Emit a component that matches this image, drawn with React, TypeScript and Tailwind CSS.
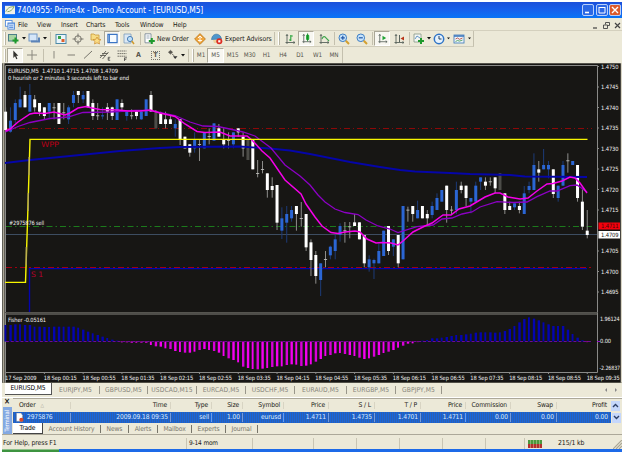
import React from "react";

type Bar = [number, number, number, number, string];

const X0 = 5.6;
const STEP = 4.847;
const xAt = (i: number) => X0 + STEP * i;

// Each entry: high, body top, body bottom, low (thirds of a pixel below `top`) and kind:
// w = bearish body, b = bullish body, g = dim body, d = doji
const SEGMENTS: { top: number; bars: Bar[] }[] = [
  {
    top: 80,
    bars: [
      [82, 95, 150, 150, "w"], [82, 122, 155, 158, "b"], [58, 69, 120, 130, "b"], [20, 58, 82, 82, "b"],
      [33, 45, 82, 82, "w"], [12, 45, 95, 95, "b"], [45, 58, 82, 95, "w"], [69, 69, 95, 108, "w"],
      [82, 82, 108, 120, "w"], [69, 69, 95, 118, "b"], [69, 82, 85, 118, "d"], [69, 69, 132, 132, "w"],
      [69, 97, 99, 118, "d"], [76, 82, 118, 132, "b"], [33, 45, 69, 82, "b"], [33, 33, 45, 69, "w"],
      [33, 45, 58, 69, "b"], [33, 33, 82, 82, "w"], [58, 69, 108, 120, "w"], [69, 106, 108, 120, "d"],
      [82, 106, 108, 118, "b"], [69, 82, 95, 120, "w"], [80, 82, 108, 120, "w"], [58, 58, 120, 120, "b"],
      [58, 69, 82, 95, "w"], [92, 95, 108, 122, "b"], [88, 106, 108, 118, "d"], [90, 95, 108, 118, "w"],
      [92, 95, 118, 120, "b"], [58, 58, 108, 108, "b"], [33, 45, 95, 95, "w"], [90, 97, 145, 145, "g"],
      [95, 100, 132, 132, "w"], [95, 118, 132, 145, "w"], [105, 118, 132, 132, "w"], [118, 132, 145, 170, "b"],
      [118, 118, 178, 195, "w"], [170, 170, 205, 205, "w"], [193, 193, 218, 230, "w"], [157, 178, 205, 218, "b"],
      [178, 192, 194, 243, "d"], [157, 157, 205, 205, "b"], [145, 168, 170, 193, "d"], [130, 130, 182, 182, "b"],
      [132, 145, 170, 170, "w"], [145, 180, 193, 205, "w"], [157, 180, 182, 205, "d"], [157, 157, 193, 205, "b"],
      [145, 145, 157, 170, "w"], [157, 170, 205, 230, "w"], [178, 180, 240, 240, "g"], [180, 180, 268, 268, "w"],
      [240, 279, 281, 292, "d"], [243, 267, 269, 280, "d"], [280, 280, 330, 353, "w"], [292, 318, 330, 353, "w"],
    ],
  },
  {
    top: 180,
    bars: [
      [15, 15, 128, 150, "w"], [82, 115, 152, 177, "b"], [78, 102, 128, 188, "b"], [78, 90, 115, 125, "b"],
      [78, 78, 102, 152, "w"], [66, 114, 116, 140, "d"], [102, 102, 202, 213, "w"], [178, 187, 240, 288, "w"],
      [213, 225, 288, 311, "w"], [250, 250, 300, 348, "b"], [213, 237, 240, 262, "d"], [197, 200, 226, 238, "b"],
      [165, 178, 213, 238, "b"], [130, 138, 165, 185, "b"], [126, 151, 153, 188, "d"], [126, 139, 141, 175, "d"],
      [102, 127, 138, 138, "w"], [127, 127, 178, 178, "w"], [165, 165, 250, 262, "w"], [226, 238, 262, 275, "b"],
      [236, 240, 250, 297, "b"], [190, 213, 250, 250, "b"], [152, 152, 228, 228, "b"], [138, 138, 213, 225, "w"],
      [178, 178, 200, 228, "b"], [165, 165, 250, 262, "w"], [78, 78, 238, 238, "b"],
    ],
  },
  {
    top: 130,
    bars: [
      [230, 239, 241, 275, "d"], [228, 228, 252, 275, "w"], [212, 240, 265, 265, "b"], [228, 228, 265, 265, "w"],
      [240, 252, 265, 285, "w"], [215, 228, 255, 265, "b"], [190, 204, 240, 240, "b"], [180, 180, 215, 215, "b"],
      [167, 167, 240, 278, "w"], [228, 239, 241, 252, "d"], [155, 180, 240, 252, "b"], [155, 167, 180, 190, "w"],
      [167, 167, 204, 228, "w"], [204, 204, 215, 250, "b"], [155, 167, 215, 215, "b"], [142, 142, 155, 180, "b"],
      [142, 155, 167, 180, "w"], [142, 154, 156, 167, "d"], [142, 142, 175, 190, "w"], [130, 130, 180, 180, "g"],
      [190, 190, 240, 252, "w"], [215, 228, 240, 240, "w"], [218, 220, 232, 240, "b"], [215, 228, 240, 250, "w"],
      [168, 190, 252, 252, "b"], [155, 168, 180, 190, "b"], [70, 105, 180, 180, "b"], [93, 118, 128, 155, "w"],
      [57, 105, 118, 118, "b"], [93, 105, 118, 145, "b"], [118, 118, 192, 204, "w"], [167, 167, 204, 215, "b"],
      [93, 105, 167, 167, "b"], [70, 91, 93, 128, "d"], [93, 93, 105, 105, "b"], [105, 105, 204, 215, "w"],
      [178, 215, 290, 300, "w"], [240, 302, 315, 325, "w"],
    ],
  },
];

const CANDLES = SEGMENTS.flatMap((s) =>
  s.bars.map(([h, t, b, l, k]) => ({ h: s.top + h / 3, t: s.top + t / 3, b: s.top + b / 3, l: s.top + l / 3, k })),
);

// Histogram ends, thirds of a pixel below the sub-window's top
const FISHER = [
  60, 60, 58, 58, 60, 60, 65, 65, 66, 66, 65, 65, 65, 65, 65, 68, 74, 80, 85, 90, 95, 99, 104, 107,
  112, 112, 113, 113, 113, 113, 120, 124, 125, 130, 132, 138, 141, 143, 143, 140, 135, 132, 135, 138, 143,
  153, 160, 165, 172, 185, 189, 192, 193, 191, 189, 186, 184, 184, 180, 178, 179, 183, 182, 178, 170,
  162, 153, 150, 145, 144, 147, 150, 153, 158, 162, 160, 155, 150, 144, 140, 135, 128, 122, 116, 115, 110,
  107, 105, 100, 100, 98, 96, 93, 90, 90, 88, 86, 83, 82, 82, 82, 83, 82, 78, 72, 63, 52, 42, 37, 41,
  46, 52, 58, 63, 63, 63, 74, 87, 98, 106, 111,
];

const FAST =
  "5.5,131 10,129 18,122 30,114 35,113 45,113.5 54,112 65,115 70,113 78,108 86,106.5 92,108 100,109.5 118,110 128,111 140,111 150,110 160,113 175,116.5 185,124 197,131.5 205,132.5 220,132 230,136 247,136 252,140 262,151 270,158 285,180 301,194 306,204 315,217 322,226 331,232.5 338,233.5 345,232 355,231 360,232 367,239 376,243 382,242.5 391,243 398,245 403,241 413,232 425,226 432,223 443,215 451,215 459,209 470,206 485,197 495,193 500,193 508,197 520,199 528,198 537,191 547,184 553,183.5 562,181 570,177 575,178 580,183 587,193";
const SLOW =
  "5.5,132 18,126.5 30,122.5 50,118.5 68,117 83,112.5 110,112 135,110.5 150,110.5 175,115.5 190,122 203,126 218,126.5 232,129.5 243,132 255,136 263,142 271,148 285,165 300,176 310,185 318,195 325,202 335,209 345,212.5 358,214.5 366,220 378,226 390,229 398,232.5 417,226.7 433,225 442,219 452,218 462,214 472,212 480,207 497,201.7 513,202.5 527,202 537,196.7 550,191 557,191 570,185.7 577,185 587,192";
const LONG =
  "5,163 30,160 80,155 120,151 160,148 180,147 240,146.5 270,148.5 290,150.5 310,154 350,162 380,167 400,170 415,171.5 450,173 470,174 510,175 525,176.5 587,177";

const PRICES = ["1.4750", "1.4745", "1.4740", "1.4735", "1.4730", "1.4725", "1.4720", "1.4715", "", "1.4705", "1.4700", "1.4695"];
const TIMES = [
  "17 Sep 2009", "18 Sep 00:15", "18 Sep 00:55", "18 Sep 01:35", "18 Sep 02:15", "18 Sep 02:55", "18 Sep 03:35", "18 Sep 04:15",
  "18 Sep 04:55", "18 Sep 05:35", "18 Sep 06:15", "18 Sep 06:55", "18 Sep 07:35", "18 Sep 08:15", "18 Sep 08:55", "18 Sep 09:35",
];

function Label({ x, y, w, fill = "#f0f0f0", size = 5.8, children }: { x: number; y: number; w: number; fill?: string; size?: number; children: string }) {
  return (
    <text className="whitespace-pre" x={x} y={y} textLength={w} lengthAdjust="spacingAndGlyphs" fontSize={size} fill={fill}>
      {children}
    </text>
  );
}

function Chart() {
  return (
    <svg className="block h-[320px] w-[620px] shrink-0" viewBox="2 63 620 320" fontFamily="'DejaVu Sans Condensed','DejaVu Sans',sans-serif">
      <rect x="2" y="63" width="620" height="320" fill="#171614" />
      <path d="M2 63.5H622" stroke="#55534c" />
      <path d="M3.5 63V383" stroke="#aca899" strokeWidth="2" />
      <path d="M5.5 383V65.5H597.5V372.5H5" fill="none" stroke="#8a8a88" />
      <path d="M5 312.5H597.5" stroke="#55544f" />
      <path d="M5 314H597.5" stroke="#85837e" strokeWidth="1.2" />
      <path d="M621.5 63V383" stroke="#d8d4c4" strokeWidth="1.5" />

      <path d="M6 128.5H592" stroke="#8c0808" strokeDasharray="6 3 1 3" />
      <path d="M6 226.5H592" stroke="#1c7a1c" strokeDasharray="6 3 1.5 3" />
      <path d="M6 234.5H597" stroke="#3d4d61" />
      <path d="M29.5 312V268.6H587" fill="none" stroke="#0404b0" strokeWidth="1.4" />
      <path d="M6 267.5H593" stroke="#a00010" strokeDasharray="6 3 2 3" />

      {CANDLES.map((c, i) => {
        const x = xAt(i);
        const wick = c.k === "b" ? "#1d3b78" : "#8d8d8b";
        const fill = c.k === "b" ? "#2b66d4" : c.k === "g" ? "#4c4c48" : "#ffffff";
        return (
          <g key={i}>
            <rect x={x - 0.5} y={c.h} width="1" height={c.l - c.h} fill={wick} />
            {c.k === "d" ? (
              <rect x={x - 1.6} y={c.t} width="3.2" height="0.9" fill="#bdbdbb" />
            ) : (
              <rect x={x - 1.5} y={c.t} width="3" height={Math.max(1, c.b - c.t)} fill={fill} />
            )}
          </g>
        );
      })}

      <polyline points={LONG} fill="none" stroke="#0505a8" strokeWidth="1.8" />
      <polyline points={SLOW} fill="none" stroke="#8c00c4" strokeWidth="1.3" />
      <polyline points={FAST} fill="none" stroke="#f400e8" strokeWidth="1.5" />
      <path d="M5 282.4H25.5L27.6 219L30 139.4H587.5" fill="none" stroke="#f8f600" strokeWidth="1.4" />
      <path d="M26.2 247V265M28.2 193V211M29 157V175" stroke="#a89868" strokeWidth="1.1" />

      <Label x={41} y={147} w={18} fill="#b80018" size={7.5}>WPP</Label>
      <Label x={31} y={277} w={12} fill="#b80030" size={7.5}>S 1</Label>
      <Label x={8} y={73} w={110}>EURUSD,M5  1.4710 1.4715 1.4708 1.4709</Label>
      <Label x={8} y={80} w={121}>0 hourish or 2 minutes 3 seconds left to bar end</Label>
      <Label x={9} y={225} w={35}>#2975876 sell</Label>

      {PRICES.map((p, i) =>
        p ? (
          <g key={i}>
            <path d={`M597 ${66.5 + i * 20.5}h2`} stroke="#8a8a88" />
            <Label x={601} y={68.8 + i * 20.5} w={17.5}>{p}</Label>
          </g>
        ) : null,
      )}
      <rect x="598.5" y="222.5" width="21.5" height="7" fill="#f4000c" />
      <Label x={601} y={228.3} w={17.5} fill="#3c0808">1.4711</Label>
      <rect x="598.5" y="231" width="21.5" height="7.5" fill="#ffffff" />
      <Label x={601} y={237} w={17.5} fill="#222222">1.4709</Label>

      {FISHER.map((v, i) => {
        const end = 305 + v / 3;
        const up = end < 341.5;
        return (
          <rect key={i} x={xAt(i) - 1.1} y={up ? end : 341.5} width={i % 3 === 0 ? 1.9 : 2.4} height={Math.max(0.6, Math.abs(end - 341.5))} fill={up ? "#0404b0" : i % 3 === 1 ? "#d800d8" : "#f400f0"} />
        );
      })}
      <path d="M6 341.5H592" stroke="#6d0899" strokeDasharray="2.9 1.95" />
      <path d="M597 341.5h3" stroke="#9010c0" />
      <Label x={8} y={322.3} w={38}>Fisher -0.05161</Label>
      <Label x={600} y={320.7} w={19.5}>1.96124</Label>
      <Label x={600} y={343.2} w={11}>0.00</Label>
      <Label x={599.5} y={370.2} w={20.5}>-2.26837</Label>

      {TIMES.map((t, i) => (
        <g key={t}>
          <path d={`M${xAt(i * 8)} 372v2`} stroke="#8a8a88" />
          <Label x={i ? 5 + i * 38.78 : 5} y={380} w={i ? 33 : 31.5}>{t}</Label>
        </g>
      ))}
      <rect x="2" y="382.5" width="620" height="1" fill="#8a8878" />
    </svg>
  );
}

const Caret = () => (
  <svg className="h-[3px] w-[4px]" viewBox="0 0 4 3"><path d="M0 0h4L2 2.6z" fill="#111" /></svg>
);
const Sep = () => <div className="h-[13px] w-px bg-[#c4c0ae]" />;
const Grip = () => <div className="h-[13px] w-[2px] border-l border-r border-l-white border-r-[#b9b5a3]" />;

function Cell({ w, on, children }: { w: string; on?: boolean; children?: React.ReactNode }) {
  return (
    <div className={`${w} flex h-[15px] shrink-0 items-center justify-center ${on ? "border border-[#aaa797] border-b-white border-r-white bg-[#f8f7f1]" : ""}`}>
      {children}
    </div>
  );
}

function Icon({ children, s = "size-[12px]" }: { children: React.ReactNode; s?: string }) {
  return <svg className={`${s} shrink-0`} viewBox="0 0 12 12" fill="none">{children}</svg>;
}

const plus = (x: number, y: number) => (
  <path d={`M${x} ${y - 3}v6M${x - 3} ${y}h6`} stroke="#1e9a2c" strokeWidth="2" />
);
const axes = <path d="M3 1.5V11M1.5 9.5H11M2 3l1-1.5L4 3M9.5 8.5l1.5 1-1.5 1" stroke="#59635c" strokeWidth="0.9" />;

function MainToolbar() {
  return (
    <div className="flex h-[16px] w-[472px] shrink-0 items-center border-r border-b border-r-[#c4c0ae] border-b-[#d0ccba]">
      <Cell w="w-[5px]"><Grip /></Cell>
      <Cell w="w-[14px]"><Icon><rect x="0.5" y="1.5" width="8" height="6.5" fill="#a9d4a4" stroke="#4c7f88" />{plus(7.5, 7.5)}</Icon></Cell>
      <Cell w="w-[5px]"><Caret /></Cell>
      <Cell w="w-[16px]"><Icon><rect x="1" y="1" width="8" height="7" fill="#d5e6f8" stroke="#6f95c4" /><path d="M3 8.5h8V4.5" stroke="#5c84b8" strokeWidth="2" /></Icon></Cell>
      <Cell w="w-[5px]"><Caret /></Cell>
      <Cell w="w-[6px]"><Sep /></Cell>
      <Cell w="w-[16px]"><Icon><rect x="1" y="1.5" width="10" height="9" fill="#e9f4fb" stroke="#4d8aa8" /><path d="M3 3h3v3H3z" fill="#39a348" /><path d="M6.5 6h3v3h-3z" fill="#e0622c" /></Icon></Cell>
      <Cell w="w-[18px]"><Icon><circle cx="6" cy="6" r="3.3" stroke="#77756c" /><path d="M6 0.5v4M6 7.5v4M0.5 6h4M7.5 6h4" stroke="#77756c" /></Icon></Cell>
      <Cell w="w-[17px]"><Icon><path d="M1 1h3l1 1h4v5H1z" fill="#f7dc84" stroke="#c9993a" strokeWidth="0.8" /><path d="M7 4l1.3 2.3 2.7.3-2 1.7.5 2.7L7 9.8l-2.5 1.2.5-2.7-2-1.7 2.7-.3z" fill="#fbdc84" stroke="#cc8d2c" strokeWidth="0.7" /></Icon></Cell>
      <Cell w="w-[16px]" on><Icon s="size-[11px]"><rect x="1" y="1.5" width="10" height="9" fill="#f6fbff" stroke="#3672c4" strokeWidth="1.3" /><path d="M2.5 2v8" stroke="#3672c4" strokeWidth="1.3" /></Icon></Cell>
      <Cell w="w-[18px]"><Icon><path d="M1 1h7v9H1z" fill="#dbe8f4" stroke="#7f9cbb" strokeWidth="0.8" /><circle cx="7" cy="6" r="2.6" fill="#bfe0f8" stroke="#4a80b8" /><path d="M8.8 8L11 11" stroke="#d09a2c" strokeWidth="1.5" /></Icon></Cell>
      <Cell w="w-[5px]"><Sep /></Cell>
      <Cell w="w-[13px]"><Icon><path d="M1 .8h6v9H1z" fill="#fff" stroke="#708090" strokeWidth="0.8" /><path d="M2.5 3h3M2.5 5h3" stroke="#8294a8" strokeWidth="0.8" />{plus(7.8, 8)}</Icon></Cell>
      <div className="w-[35px] pt-[2px] pl-[1px] text-[6.8px] tracking-[-0.1px]">New Order</div>
      <Cell w="w-[18px]"><Icon><path d="M6 .6L11.4 6 6 11.4.6 6z" fill="#f0a63c" stroke="#b8741c" strokeWidth="0.8" /><path d="M6 3v6M4 5l2-2 2 2M4 7.5h4" stroke="#fff" strokeWidth="0.9" /></Icon></Cell>
      <Cell w="w-[15px]"><Icon><path d="M.5 6.5C1 2 4 1 6 1.2S10 3 10.5 6z" fill="#4e96cc" stroke="#2f6e9e" strokeWidth="0.6" /><path d="M2 7h5v3H3z" fill="#ecd29c" /><circle cx="8.3" cy="8.3" r="3" fill="#dd2c22" /><rect x="7.2" y="7.2" width="2.2" height="2.2" fill="#fff" /></Icon></Cell>
      <div className="w-[49px] pt-[2px] pl-px text-[6.8px] tracking-[-0.08px]">Expert Advisors</div>
      <Cell w="w-[3px]"><Sep /></Cell>
      <Cell w="w-[5px]"><Grip /></Cell>
      <Cell w="w-[17px]"><Icon>{axes}<path d="M6.8 2v6M6.8 3h2M5 7h2" stroke="#25a238" strokeWidth="1.1" /></Icon></Cell>
      <Cell w="w-[16px]" on><Icon s="size-[11px]">{axes}<rect x="5.5" y="2" width="3.5" height="5.5" rx="1" fill="#27b53c" /><path d="M7.2.5v8.5" stroke="#188028" /></Icon></Cell>
      <Cell w="w-[19px]"><Icon>{axes}<path d="M4 6c1-3 3-3 4-1l3 3" stroke="#3fa64c" strokeWidth="1.1" /></Icon></Cell>
      <Cell w="w-[2px]"><Sep /></Cell>
      <Cell w="w-[18px]"><Icon><circle cx="4.8" cy="4.8" r="3.8" fill="#c6e2fa" stroke="#3e7fc4" /><path d="M4.8 2.8v4M2.8 4.8h4" stroke="#2058a8" strokeWidth="1.2" /><path d="M7.8 7.8L11 11" stroke="#d4a030" strokeWidth="2" /></Icon></Cell>
      <Cell w="w-[17px]"><Icon><circle cx="4.8" cy="4.8" r="3.8" fill="#c6e2fa" stroke="#3e7fc4" /><path d="M2.8 4.8h4" stroke="#2058a8" strokeWidth="1.2" /><path d="M7.8 7.8L11 11" stroke="#d4a030" strokeWidth="2" /></Icon></Cell>
      <Cell w="w-[4px]"><Sep /></Cell>
      <Cell w="w-[16px]" on><Icon s="size-[11px]">{axes}<path d="M6 3l4 2.5L6 8z" fill="#1fa234" /></Icon></Cell>
      <Cell w="w-[18px]"><Icon>{axes}<path d="M6.5 2v7" stroke="#59635c" /><path d="M11 3.5v4L7.5 5.5z" fill="#b83418" /></Icon></Cell>
      <Cell w="w-[3px]"><Sep /></Cell>
      <Cell w="w-[15px]"><Icon><path d="M1 1h7v8H1z" fill="#f3f7f3" stroke="#859585" strokeWidth="0.8" /><path d="M2 6l2-3 3 2" stroke="#578ac2" strokeWidth="0.9" />{plus(8, 8)}</Icon></Cell>
      <Cell w="w-[5px]"><Caret /></Cell>
      <Cell w="w-[16px]"><Icon><circle cx="6" cy="6" r="4.7" fill="#e6f2fd" stroke="#2f74c6" strokeWidth="1.5" /><path d="M6 3v3h2.5" stroke="#24405c" /></Icon></Cell>
      <Cell w="w-[3px]"><Caret /></Cell>
      <Cell w="w-[18px]"><Icon><rect x="1" y="2" width="10" height="8" fill="#edf4fb" stroke="#4d83bd" strokeWidth="0.9" /><path d="M1 3h10" stroke="#3f79bd" strokeWidth="1.6" /><path d="M2.5 6l2-1 2 1.3 3-1.3" stroke="#b03a2c" strokeWidth="0.8" /><path d="M2.5 8.5l2-1 2 .6 3-1" stroke="#3a9448" strokeWidth="0.8" /></Icon></Cell>
      <Cell w="w-[3px]"><Caret /></Cell>
    </div>
  );
}

function LineToolbar() {
  return (
    <div className="flex h-[16px] w-[341px] shrink-0 items-center border-r border-r-[#c4c0ae] text-[6.3px] text-[#55534c]">
      <Cell w="w-[5px]"><Grip /></Cell>
      <Cell w="w-[16px]" on><Icon s="size-[10px]"><path d="M4 .5v9l2-2 1.5 3.5 1.4-.6L7.4 7H10z" fill="#33322e" /></Icon></Cell>
      <Cell w="w-[18px]"><Icon><path d="M6 1v10M1 6h10" stroke="#8a887e" /></Icon></Cell>
      <Cell w="w-[4px]"><Sep /></Cell>
      <Cell w="w-[17px]"><Icon><path d="M6 2v7.5" stroke="#8a887e" /></Icon></Cell>
      <Cell w="w-[17px]"><Icon><path d="M2.5 6h7.5" stroke="#8a887e" strokeWidth="1.1" /></Icon></Cell>
      <Cell w="w-[17px]"><Icon><path d="M2 9.5L10 2" stroke="#77756c" strokeWidth="1" /></Icon></Cell>
      <Cell w="w-[17px]"><Icon><path d="M1 9l6-7M3.5 10l6-7M1 6.5h6M3 4.5h6" stroke="#5e5c55" strokeWidth="0.9" /><path d="M11.3 8.3H9.2v3h2M9.2 9.8h1.6" stroke="#333" strokeWidth="0.7" /></Icon></Cell>
      <Cell w="w-[17px]"><Icon><path d="M1.5 2h9M1.5 4.6h9M1.5 7.2h9" stroke="#77756c" strokeDasharray="1.5 .5" /><path d="M8.5 12V8.8h2.5M8.5 10.3h1.8" stroke="#333" strokeWidth="0.7" /></Icon></Cell>
      <Cell w="w-[17px]"><b className="pt-px text-[7px]">A</b></Cell>
      <Cell w="w-[17px]"><div className="flex h-[9px] w-[9px] items-center justify-center border border-dotted border-[#77756c] text-[6.5px] font-bold">T</div></Cell>
      <Cell w="w-[17px]"><Icon><path d="M1.5 3.2L3.5 1.4l2 1.8-2 1.8zM5 5l2.5 2" fill="#55534c" stroke="#55534c" strokeWidth="0.8" /><path d="M6 7.2h4.5L8.2 10z" fill="#333" /></Icon></Cell>
      <Cell w="w-[4px]"><Caret /></Cell>
      <Cell w="w-[6px]"><Sep /></Cell>
      <Cell w="w-[4px]"><Grip /></Cell>
      <div className="flex items-center pt-px">
        <Cell w="w-[12px]">M1</Cell>
        <Cell w="w-[17px]" on>M5</Cell>
        <Cell w="w-[17px]">M15</Cell>
        <Cell w="w-[17px]">M30</Cell>
        <Cell w="w-[17px]">H1</Cell>
        <Cell w="w-[16px]">H4</Cell>
        <Cell w="w-[18px]">D1</Cell>
        <Cell w="w-[17px]">W1</Cell>
        <Cell w="w-[16px]">MN</Cell>
      </div>
    </div>
  );
}

const MENU: [string, string][] = [
  ["File", "w-[19px]"], ["View", "w-[24px]"], ["Insert", "w-[25px]"], ["Charts", "w-[29px]"],
  ["Tools", "w-[25px]"], ["Window", "w-[33px]"], ["Help", "w-[20px]"],
];

const CHART_TABS: [string, string][] = [
  ["EURJPY,M5", "w-[48px]"], ["GBPUSD,M5", "w-[48px]"], ["USDCAD,M15", "w-[49px]"], ["EURCAD,M5", "w-[49px]"],
  ["USDCHF,M5", "w-[49px]"], ["EURAUD,M5", "w-[52px]"], ["EURGBP,M5", "w-[49px]"], ["GBPJPY,M5", "w-[46px]"],
];

const COLUMNS: [string, string, string][] = [
  ["Time", "2009.09.18 09:35", "w-[100px]"], ["Type", "sell", "w-[41px]"], ["Size", "1.00", "w-[31px]"],
  ["Symbol", "eurusd", "w-[41px]"], ["Price", "1.4711", "w-[45px]"], ["S / L", "1.4735", "w-[46px]"],
  ["T / P", "1.4701", "w-[46px]"], ["Price", "1.4711", "w-[45px]"], ["Commission", "0.00", "w-[45px]"],
  ["Swap", "0.00", "w-[46px]"], ["Profit", "0.00", "w-[54px]"],
];

const TERMINAL_TABS: [string, string][] = [
  ["Account History", "w-[58px]"], ["News", "w-[28px]"], ["Alerts", "w-[29px]"], ["Mailbox", "w-[34px]"],
  ["Experts", "w-[34px]"], ["Journal", "w-[32px]"],
];

function Terminal() {
  return (
    <div className="flex h-[37px] w-[620px] shrink-0 border-t border-t-white">
      <div className="flex w-[10px] shrink-0 flex-col items-center">
        <div className="h-[9px] text-[8px] leading-[8px] font-bold">×</div>
        <div className="flex h-[27px] w-[9px] items-center justify-center bg-[#84a9e2]">
          <span className="rotate-180 text-[6px] leading-none text-white [writing-mode:vertical-rl]">Terminal</span>
        </div>
      </div>
      <div className="flex w-[610px] flex-col pl-[1px]">
        <div className="flex h-[14px] items-center border-t border-t-[#aca899]">
          <div className="w-[57px] pl-[6px]">Order<span className="pl-[5px] text-[5px] text-[#99968a]">△</span></div>
          {COLUMNS.map(([h, , w], i) => (
            <div key={i} className={`${w} shrink-0 border-l border-l-[#d8d4c3] pr-[3px] text-right whitespace-nowrap`}>{h}</div>
          ))}
          <div className="ml-px flex h-[10px] w-[9px] items-center justify-center bg-[#c5d7fb]">
            <svg className="h-[5px] w-[7px]" viewBox="0 0 7 5"><path d="M1 4l2.5-2.5L6 4" fill="none" stroke="#2c3f66" strokeWidth="1.4" /></svg>
          </div>
        </div>
        <div className="flex h-[11px] items-center">
          <div className="flex h-[11px] w-[598px] items-center bg-[repeating-linear-gradient(90deg,#2d5fb0_0_1px,#1766dc_1px_2px)] text-[#dceaff]">
            <div className="flex w-[57px] items-center">
              <Icon s="size-[9px] ml-[2px]"><path d="M2 0h6l2 3v8H2z" fill="#fff" stroke="#888" strokeWidth="0.6" /><circle cx="8.5" cy="9" r="2.8" fill="#dc4a28" /></Icon>
              <span className="pl-[3px] tracking-[-0.2px]">2975876</span>
            </div>
            {COLUMNS.map(([, v, w], i) => (
              <div key={i} className={`${w} h-[9px] shrink-0 border-l border-l-[#6f9be4] pr-[2px] text-right leading-[9px] whitespace-nowrap`}>{v}</div>
            ))}
          </div>
          <div className="ml-[1px] flex h-[10px] w-[9px] items-center justify-center bg-[#c5d7fb]">
            <svg className="h-[5px] w-[7px]" viewBox="0 0 7 5"><path d="M1 1l2.5 2.5L6 1" fill="none" stroke="#2c3f66" strokeWidth="1.4" /></svg>
          </div>
        </div>
        <div className="flex h-[11px] items-start text-[#77756a]">
          <div className="flex h-[11px] w-[30px] items-center justify-center border-r border-b border-[#444] bg-white text-black">Trade</div>
          <div className="flex h-[11px] items-center">
            {TERMINAL_TABS.map(([t, w]) => (
              <div key={t} className={`${w} h-[8px] border-r border-r-[#77756a] text-center leading-[8px] whitespace-nowrap`}>{t}</div>
            ))}
          </div>
        </div>
      </div>
    </div>
  );
}

const WinButton = ({ bg, children }: { bg: string; children: React.ReactNode }) => (
  <div className={`flex size-[12px] items-center justify-center rounded-[2px] border border-[#b9d0fa] ${bg}`}>
    <svg className="size-[8px]" viewBox="0 0 8 8" fill="none" stroke="#fff">{children}</svg>
  </div>
);

export default function App() {
  return (
    <div className="h-[452px] w-[625px] overflow-hidden bg-white pt-[2px] font-['DejaVu_Sans_Condensed','DejaVu_Sans',sans-serif] text-[6.7px] leading-none tracking-[-0.12px] text-[#1b1a17]">
      <div className="ml-[2px] flex h-[447px] w-[620px] flex-col bg-[#ece9d8]">
        <div className="flex h-[16px] shrink-0 items-center bg-linear-to-b from-[#1c50da] via-[#1660ec] to-[#0874f6] text-white">
          <Icon s="size-[10px] ml-[3px]"><path d="M0 1h12v10H0z" fill="#f1f2e8" /><path d="M1 8c2-5 6-6 10-6-2 4-5 6-8 6" stroke="#83a866" strokeWidth="1.2" /></Icon>
          <div className="w-[480px] pt-[1px] pl-[2px] text-[8.4px] tracking-[-0.1px] whitespace-nowrap">7404955: Prime4x - Demo Account - [EURUSD,M5]</div>
          <div className="ml-auto flex gap-[1.5px] pr-[1px]">
            <WinButton bg="bg-[#2c68e4]"><path d="M1 6.5h4" strokeWidth="1.6" /></WinButton>
            <WinButton bg="bg-[#2c68e4]"><path d="M1 1.5h6M1 1v6h6V1" /></WinButton>
            <WinButton bg="bg-[#dc5a2c]"><path d="M1 1l6 6M7 1L1 7" strokeWidth="1.4" /></WinButton>
          </div>
        </div>
        <div className="flex h-[13px] shrink-0 items-center border-b border-b-[#d4d0be] pt-[2px] text-[6.8px]">
          <Icon s="size-[10px] ml-[3px] mr-[3px]"><rect x="0.5" y="0.5" width="8" height="7" fill="#fff" stroke="#4c86d8" /><rect x="3.5" y="3.5" width="8" height="7.5" fill="#d6e6fb" stroke="#4c86d8" /><path d="M3.5 4.5h8M5 7h5M5 9h5" stroke="#4c86d8" /></Icon>
          {MENU.map(([m, w]) => <div key={m} className={w}>{m}</div>)}
          <div className="ml-auto flex gap-[4px] pr-[1px]">
            <svg className="size-[7px]" viewBox="0 0 7 7"><path d="M1 6h4" stroke="#444" strokeWidth="1.2" /></svg>
            <svg className="size-[7px]" viewBox="0 0 7 7" fill="none" stroke="#444" strokeWidth="0.9"><path d="M2.5 2.5v-2h4v3h-2M.5 3h4v3.5h-4z" /></svg>
            <svg className="size-[7px]" viewBox="0 0 7 7"><path d="M1 1l5 5M6 1L1 6" stroke="#444" strokeWidth="1.2" /></svg>
          </div>
        </div>
        <MainToolbar />
        <LineToolbar />
        <Chart />
        <div className="flex h-[14px] shrink-0 items-center pl-[3px] text-[#85837a]">
          <div className="flex h-[12px] w-[47px] items-center justify-center self-start border-r border-b border-[#555] bg-white text-black">EURUSD,M5</div>
          {CHART_TABS.map(([t, w]) => (
            <div key={t} className={`${w} h-[8px] border-r border-r-[#99968a] text-center leading-[8px] tracking-[0.08px] whitespace-nowrap`}>{t}</div>
          ))}
          <div className="ml-auto flex gap-[6px] pr-[4px]">
            <svg className="size-[4px]" viewBox="0 0 4 4"><path d="M3 0L1 2l2 2" fill="#888" /></svg>
            <svg className="size-[4px]" viewBox="0 0 4 4"><path d="M1 0l2 2-2 2" fill="#888" /></svg>
          </div>
        </div>
        <Terminal />
        <div className="flex h-[15px] shrink-0 items-center border-t border-t-[#aca899] pt-[3px] text-[6.9px]">
          <div className="w-[184px] pl-px">For Help, press F1</div>
          <div className="flex h-[11px] items-center">
            <div className="flex h-full w-[66px] items-center border-l border-l-[#c9c5b3] pl-[2px] text-[6.5px] tracking-[-0.15px]">9-14 mom</div>
            <div className="h-full w-[61px] border-l border-l-[#c9c5b3]" />
            <div className="h-full w-[43px] border-l border-l-[#c9c5b3]" />
            <div className="h-full w-[43px] border-l border-l-[#c9c5b3]" />
            <div className="h-full w-[43px] border-l border-l-[#c9c5b3]" />
            <div className="h-full w-[43px] border-l border-l-[#c9c5b3]" />
            <div className="h-full w-[39px] border-l border-l-[#c9c5b3]" />
            <div className="flex h-full w-[34px] items-center border-l border-l-[#c9c5b3] pl-[3px]">
              <svg className="h-[8px] w-[14px]" viewBox="0 0 14 8">
                <path d="M0 0h14v4H0z" fill="#4b9a3c" />
                <path d="M0 4h14v4H0z" fill="#b4302c" />
                <path d="M2.5 0v8M5.5 0v8M8.5 0v8M11.5 0v8" stroke="#e8e4d0" strokeWidth="0.4" />
              </svg>
            </div>
            <div>215/1 kb</div>
          </div>
          <svg className="mt-auto ml-auto h-[9px] w-[9px]" viewBox="0 0 9 9"><path d="M0 9l9-9M3 9l6-6M6 9l3-3" stroke="#a9a594" strokeWidth="1.2" /></svg>
        </div>
      </div>
      <div className="ml-[2px] flex h-[3px] w-[620px] bg-[#1d6ae8]">
        <div className="h-full w-[57px] border-t border-t-[#8ec08a] bg-[#3d9440]" />
      </div>
    </div>
  );
}
